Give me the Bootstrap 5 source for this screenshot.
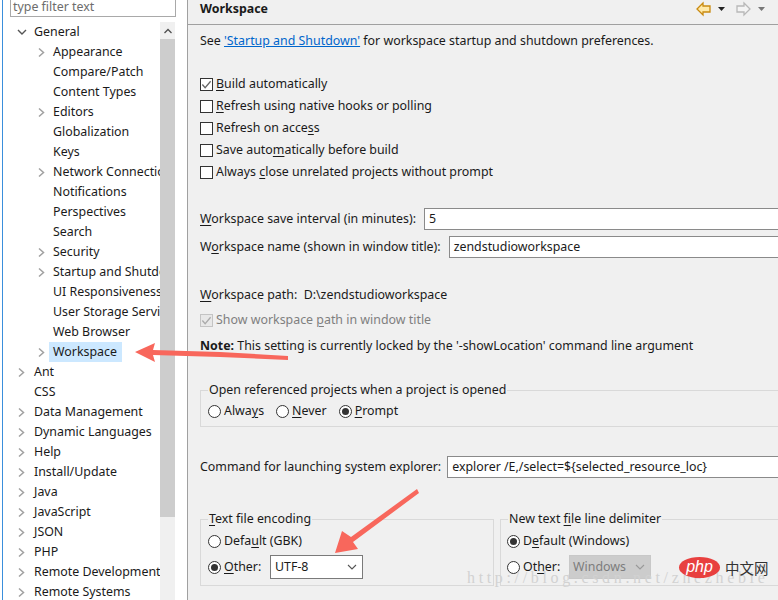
<!doctype html>
<html lang="en"><head><meta charset="utf-8"><title>Workspace preferences</title>
<link href="https://cdn.jsdelivr.net/npm/bootstrap@5.3.0/dist/css/bootstrap.min.css" rel="stylesheet">
<style>
html,body{margin:0;height:600px;overflow:hidden;background:#f0f0f0}
body,input,select{font-family:"Noto Sans","Open Sans",sans-serif;font-size:12.4px;color:#1a1a1a;line-height:20px}
.shell{width:778px;height:600px;overflow:hidden;position:relative}
.side{width:186px;height:600px;flex:none;background:#fff;border-left:1px solid #3a8fdc;border-right:1px solid #a0a0a0;margin-left:2px;box-shadow:-2px 0 0 #fff;padding-left:7px}
.filter{width:166px;height:17px;border:1px solid #a9a9a9;border-top:0;padding:0 2px;color:#6d6d6d;line-height:14px;margin-bottom:4px}
.treewrap{height:579px}
.tree{width:150px;overflow:hidden;flex:none;padding-top:1px}
.sbtrack{width:15px;background:#f0f0f0;height:579px;flex:none;margin-top:1px}
.sbup{height:17px;background:#f0f0f0;display:flex;align-items:center;justify-content:center}
.sbthumb{height:478px;background:#cdcdcd}
.node{height:20px;display:flex;align-items:center;white-space:nowrap}
.l1{padding-left:7px}.l2{padding-left:27px}
.tw{flex:none;display:flex}
.l1 .tw{width:17px}.l2 .tw{width:16px}
.sel{background:#cce8ff;padding:0 5px 0 4px;margin-left:-4px;height:20px;line-height:20px}
.main{flex:1;min-width:0;padding-left:12px;position:relative}
.head{height:25px;border-bottom:1px solid #a0a0a0;margin-left:-12px;padding-left:12px;font-weight:700;line-height:17px;display:flex;justify-content:space-between}
.nav-ic{display:flex;align-items:flex-start;padding-top:1px;margin-right:12px}
.see{margin-top:6px;height:20px}
.see a{color:#0066cc}
.checks{margin-top:22px}
.chk{height:22px;display:flex;align-items:center;white-space:nowrap}
.box{width:13px;height:13px;border:1px solid #333;background:#fff;flex:none;margin-right:3px;display:flex;align-items:center;justify-content:center}
.box.off{border-color:#c4c4c4;background:#e8e8e8}
.muted{color:#7f7f7f}
.frow{display:flex;align-items:center;height:22px;white-space:nowrap}
.fld{height:22px;border:1px solid #8a8a8a;background:#fff;padding:0 4px;flex:none;width:400px;line-height:20px}
.grp{border:1px solid #d9d9d9;border-right:0;position:relative}
.grp .cap{position:absolute;top:-11px;left:7px;background:#f0f0f0;padding:0 1px;white-space:nowrap}
.rad{width:13px;height:13px;border:1px solid #333;border-radius:50%;background:#fff;flex:none;margin-right:3px;display:flex;align-items:center;justify-content:center}
.rad.on::after{content:"";width:7px;height:7px;border-radius:50%;background:#333}
.ropt{display:flex;align-items:center;white-space:nowrap;height:20px}
.wide{width:62px}
.pick{height:24px;border:1px solid #7a7a7a;background:#fff;display:flex;align-items:center;justify-content:space-between;padding:0 5px 0 4px}
.pick.off{background:#ccc;border-color:#c8c8c8;color:#7c7c7c;padding-left:3px}
.over{position:absolute;left:0;top:0;pointer-events:none}
.wm{position:absolute;left:467px;top:568px;font-family:"Liberation Serif",serif;font-size:16px;color:#d2d2d2;white-space:nowrap;line-height:20px;letter-spacing:3.650px}
.logo{position:absolute;left:679px;top:557px;width:41px;height:21px;border-radius:50%;background:#e8403f;color:#fff;font-family:"Liberation Sans",sans-serif;font-style:italic;font-size:16px;line-height:20px;text-align:center}
.logotx{position:absolute;left:725px;top:557px;font-family:"Noto Sans CJK SC",sans-serif;font-size:14.5px;color:#333;line-height:22px;white-space:nowrap}
u{text-underline-offset:2px;text-decoration-thickness:1px}
</style></head><body>
<div class="shell d-flex">
<aside class="side">
 <div class="filter">type filter text</div>
 <div class="d-flex treewrap">
  <div class="tree">
   <div class="node l1"><span class="tw"><svg width="10" height="10" viewBox="0 0 10 10"><path d="M1 3l4 4 4-4" fill="none" stroke="#555" stroke-width="1.4"/></svg></span>General</div>
   <div class="node l2"><span class="tw chev"></span>Appearance</div>
   <div class="node l2"><span class="tw"></span>Compare/Patch</div>
   <div class="node l2"><span class="tw"></span>Content Types</div>
   <div class="node l2"><span class="tw chev"></span>Editors</div>
   <div class="node l2"><span class="tw"></span>Globalization</div>
   <div class="node l2"><span class="tw"></span>Keys</div>
   <div class="node l2"><span class="tw chev"></span>Network Connections</div>
   <div class="node l2"><span class="tw"></span>Notifications</div>
   <div class="node l2"><span class="tw"></span>Perspectives</div>
   <div class="node l2"><span class="tw"></span>Search</div>
   <div class="node l2"><span class="tw chev"></span>Security</div>
   <div class="node l2"><span class="tw chev"></span>Startup and Shutdown</div>
   <div class="node l2"><span class="tw"></span>UI Responsiveness</div>
   <div class="node l2"><span class="tw"></span>User Storage Service</div>
   <div class="node l2"><span class="tw"></span>Web Browser</div>
   <div class="node l2"><span class="tw chev"></span><span class="sel">Workspace</span></div>
   <div class="node l1"><span class="tw chev"></span>Ant</div>
   <div class="node l1"><span class="tw"></span>CSS</div>
   <div class="node l1"><span class="tw chev"></span>Data Management</div>
   <div class="node l1"><span class="tw chev"></span>Dynamic Languages</div>
   <div class="node l1"><span class="tw chev"></span>Help</div>
   <div class="node l1"><span class="tw chev"></span>Install/Update</div>
   <div class="node l1"><span class="tw chev"></span>Java</div>
   <div class="node l1"><span class="tw chev"></span>JavaScript</div>
   <div class="node l1"><span class="tw chev"></span>JSON</div>
   <div class="node l1"><span class="tw chev"></span>PHP</div>
   <div class="node l1"><span class="tw chev"></span>Remote Development</div>
   <div class="node l1"><span class="tw chev"></span>Remote Systems</div>
  </div>
  <div class="sbtrack">
   <div class="sbup"><svg width="10" height="8" viewBox="0 0 10 8"><path d="M1.500 6l3.500-3.500 3.500 3.500" fill="none" stroke="#505050" stroke-width="1.300"/></svg></div>
   <div class="sbthumb"></div>
  </div>
 </div>
</aside>
<main class="main">
 <div class="head"><span>Workspace</span>
  <span class="nav-ic"><svg width="70" height="16" viewBox="0 0 70 16">
   <path d="M7 2L1 8l6 6v-3h7V5H7z" fill="#ffe9a8" stroke="#c98a10" stroke-width="1.300"/>
   <path d="M22 6h7l-3.500 4z" fill="#222"/>
   <path d="M48 2l6 6-6 6v-3h-7V5h7z" fill="#f4f4f4" stroke="#b8b8b8" stroke-width="1.300"/>
   <path d="M62 6h7l-3.500 4z" fill="#777"/></svg></span></div>
 <div class="see">See <a href="#">'Startup and Shutdown'</a> for workspace startup and shutdown preferences.</div>
 <div class="checks">
  <div class="chk"><span class="box"><svg width="11" height="11" viewBox="0 0 12 12"><path d="M1.500 6l3 3.500 6-7" fill="none" stroke="#666" stroke-width="1.400"/></svg></span><span><u>B</u>uild automatically</span></div>
  <div class="chk"><span class="box"></span><span><u>R</u>efresh using native hooks or polling</span></div>
  <div class="chk"><span class="box"></span><span>Refresh on acce<u>s</u>s</span></div>
  <div class="chk"><span class="box"></span><span>Save auto<u>m</u>atically before build</span></div>
  <div class="chk"><span class="box"></span><span>Always <u>c</u>lose unrelated projects without prompt</span></div>
 </div>
 <div class="frow" style="margin-top:25px"><span><u>W</u>orkspace save interval (in minutes):</span><span class="fld ms-2">5</span></div>
 <div class="frow" style="margin-top:6px"><span>W<u>o</u>rkspace name (shown in window title):</span><span class="fld ms-2">zendstudioworkspace</span></div>
 <div class="frow" style="margin-top:26px"><span><u>W</u>orkspace path:&nbsp; D:\zendstudioworkspace</span></div>
 <div class="chk muted" style="margin-top:3px"><span class="box off"><svg width="11" height="11" viewBox="0 0 12 12"><path d="M1.500 6l3 3.500 6-7" fill="none" stroke="#aaa" stroke-width="1.400"/></svg></span><span>Show workspace <u>p</u>ath in window title</span></div>
 <div class="frow" style="margin-top:5px;height:20px"><b>Note:</b>&nbsp;This setting is currently locked by the '-showLocation' command line argument</div>
 <div class="grp" style="margin-top:34px;height:37px;padding:10px 7px 0 7px">
  <span class="cap">Open referenced projects when a project is opened</span>
  <div class="d-flex" style="gap:12px"><span class="ropt"><span class="rad"></span>Alwa<u>y</u>s</span><span class="ropt"><span class="rad"></span><u>N</u>ever</span><span class="ropt"><span class="rad on"></span><u>P</u>rompt</span></div>
 </div>
 <div class="frow" style="margin-top:29px"><span>Command for launching system explorer:</span><span class="fld" style="margin-left:6px">explorer /E,/select=${selected_resource_loc}</span></div>
 <div class="d-flex" style="margin-top:41px;gap:6px">
  <div class="grp" style="width:294px;height:67px;border-right:1px solid #d9d9d9;padding:11px 7px 0 7px;flex:none">
   <span class="cap"><u>T</u>ext file encoding</span>
   <div class="ropt"><span class="rad"></span>Defa<u>u</u>lt (GBK)</div>
   <div class="d-flex align-items-center" style="margin-top:4px"><span class="ropt wide"><span class="rad on"></span><u>O</u>ther:</span><span class="pick" style="width:93px"><span>UTF-8</span><svg width="10" height="7" viewBox="0 0 10 7"><path d="M1 1l4 4 4-4" fill="none" stroke="#555" stroke-width="1.100"/></svg></span></div>
  </div>
  <div class="grp flex-grow-1" style="height:67px;padding:11px 6px 0 6px">
   <span class="cap">New text <u>f</u>ile line delimiter</span>
   <div class="ropt"><span class="rad on"></span>D<u>e</u>fault (Windows)</div>
   <div class="d-flex align-items-center" style="margin-top:4px"><span class="ropt wide"><span class="rad"></span>Ot<u>h</u>er:</span><span class="pick off" style="width:82px"><span>Windows</span><svg width="10" height="7" viewBox="0 0 10 7"><path d="M1 1l4 4 4-4" fill="none" stroke="#999" stroke-width="1.100"/></svg></span></div>
  </div>
 </div>
</main>
<svg class="over" width="778" height="600" viewBox="0 0 778 600" aria-hidden="true">
 <path d="M135 352L155 343 153 350 220 352 288 356 288 360 220 357 153 355 155 362z" fill="#f8675c"/>
 <path d="M417 489L351 537 342 531 335 553 358 549 353 542 419 493z" fill="#f8675c"/>
</svg>
<div class="wm">http://blog.csdn.net/zhezhebie</div>
<div class="logo">php</div>
<div class="logotx">中文网</div>
</div>
<script src="https://cdn.jsdelivr.net/npm/bootstrap@5.3.0/dist/js/bootstrap.bundle.min.js"></script>
<script>
document.querySelectorAll('.chev').forEach(function(e){e.innerHTML='<svg width="9" height="11" viewBox="0 0 9 11"><path d="M2 1.500l4.500 4-4.500 4" fill="none" stroke="#a0a0a0" stroke-width="1.500"/></svg>';});
</script>
</body></html>
